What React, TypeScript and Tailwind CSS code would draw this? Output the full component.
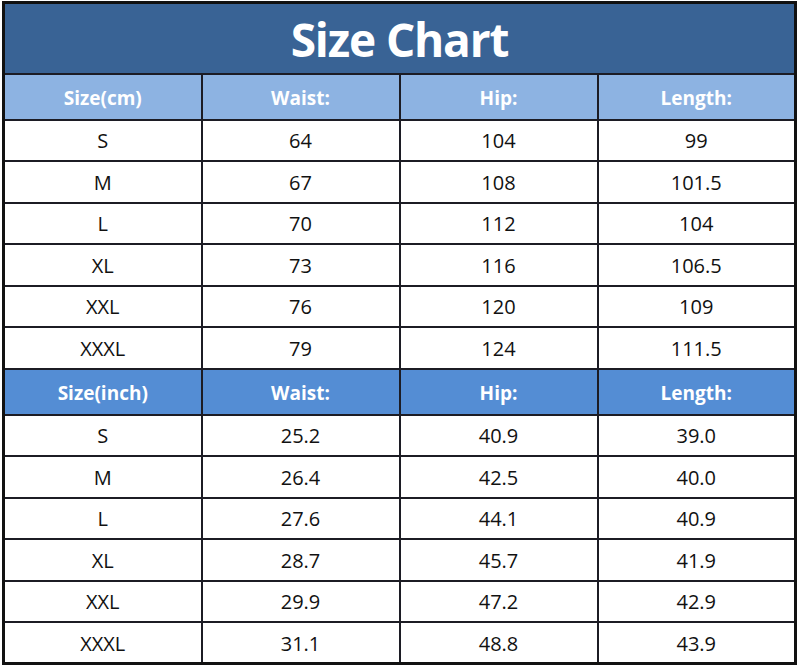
const cm = [
  ['S', '64', '104', '99'],
  ['M', '67', '108', '101.5'],
  ['L', '70', '112', '104'],
  ['XL', '73', '116', '106.5'],
  ['XXL', '76', '120', '109'],
  ['XXXL', '79', '124', '111.5'],
];

const inch = [
  ['S', '25.2', '40.9', '39.0'],
  ['M', '26.4', '42.5', '40.0'],
  ['L', '27.6', '44.1', '40.9'],
  ['XL', '28.7', '45.7', '41.9'],
  ['XXL', '29.9', '47.2', '42.9'],
  ['XXXL', '31.1', '48.8', '43.9'],
];

function HeaderRow({ first, bg }: { first: string; bg: string }) {
  return (
    <tr className={`h-[46px] ${bg}`}>
      {[first, 'Waist:', 'Hip:', 'Length:'].map((h) => (
        <th key={h} className="border-2 border-[#1c1c24] text-white font-bold text-[19px] leading-[24px] pt-[3px]">
          {h}
        </th>
      ))}
    </tr>
  );
}

function DataRows({ rows }: { rows: string[][] }) {
  return (
    <>
      {rows.map((r) => (
        <tr key={r[0] + r[1]} className="h-[41.5px] bg-white">
          {r.map((c, i) => (
            <td key={i} className="border-2 border-[#1c1c24] text-center text-[20px] leading-[24px] text-[#111] pt-[2px]">
              {c}
            </td>
          ))}
        </tr>
      ))}
    </>
  );
}

export default function App() {
  return (
    <div className="w-[800px] h-[668px] bg-white pt-[1px] pl-[2px]" style={{ fontFamily: '"Open Sans", "Liberation Sans", sans-serif' }}>
      <table className="w-[795px] border-collapse border-[3px] border-[#111] table-fixed">
        <colgroup>
          <col className="w-[198px]" />
          <col className="w-[198px]" />
          <col className="w-[198px]" />
          <col />
        </colgroup>
        <thead>
          <tr className="h-[71px] bg-[#396395]">
            <th colSpan={4} className="border-2 border-[#1c1c24] text-white font-bold text-[46px] leading-[50px] tracking-tight pt-[2px]">
              Size Chart
            </th>
          </tr>
        </thead>
        <tbody>
          <HeaderRow first="Size(cm)" bg="bg-[#8db3e2]" />
          <DataRows rows={cm} />
          <HeaderRow first="Size(inch)" bg="bg-[#548dd4]" />
          <DataRows rows={inch} />
        </tbody>
      </table>
    </div>
  );
}
